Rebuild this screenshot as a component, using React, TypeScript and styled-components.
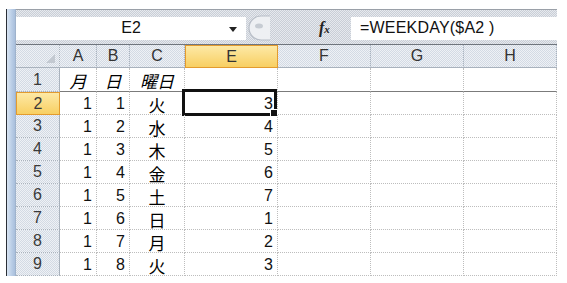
import { createGlobalStyle } from "styled-components";
import styled, { css } from "styled-components";

const GlobalStyle = createGlobalStyle`
  html, body {
    margin: 0;
    padding: 0;
    background: #fff;
  }
  body {
    font-family: "Liberation Sans", Arial, "Noto Sans CJK JP", sans-serif;
    color: #111;
  }
`;

const dither = (a: string, b: string) => css`
  background: repeating-conic-gradient(${a} 0 25%, ${b} 0 50%) 0 0 / 2px 2px;
`;

const Frame = styled.div`
  display: flex;
  padding: 9px 0 0 6px;
  width: 556px;
  height: 267px;
`;

const SideStrip = styled.div`
  width: 8px;
  border-left: 1px solid #2b2f36;
  border-right: 1px solid #9fb3cc;
  background: linear-gradient(90deg, #d9e5f3 0, #b9cde6 60%, #a9bfdc 100%);
`;

const Main = styled.div`
  width: 541px;
  display: flex;
  flex-direction: column;
`;

const FormulaBar = styled.div`
  height: 36px;
  box-sizing: border-box;
  border-top: 1px solid #9aa0a8;
  border-bottom: 1px solid #6f757d;
  ${dither("#c9ced6", "#e6e9ee")}
  display: flex;
  align-items: center;
  padding-top: 2px;
`;

const NameBox = styled.div`
  position: relative;
  width: 230px;
  height: 23px;
  background: #fff;
  display: flex;
  align-items: center;
  justify-content: center;
  font-size: 16px;
  color: #111;
`;

const DropArrow = styled.span`
  position: absolute;
  right: 9px;
  top: 10px;
  width: 0;
  height: 0;
  border-left: 4px solid transparent;
  border-right: 4px solid transparent;
  border-top: 5px solid #222;
`;

const Knob = styled.svg`
  margin-left: 2px;
  flex: none;
`;

const FxLabel = styled.span`
  margin-left: 49px;
  width: 32px;
  font-family: "Liberation Serif", "Times New Roman", serif;
  font-style: italic;
  font-weight: bold;
  font-size: 16px;
  color: #222;
  sub {
    font-size: 11px;
    vertical-align: baseline;
  }
`;

const FormulaInput = styled.div`
  flex: 1;
  height: 23px;
  background: #fff;
  display: flex;
  align-items: center;
  padding-left: 9px;
  font-size: 16px;
  color: #111;
  letter-spacing: 0.2px;
`;

const Grid = styled.div`
  display: grid;
  grid-template-columns: 44px 37px 33px 55px 93px 93px 93px 93px;
  grid-template-rows: 23px 24px repeat(8, 23px);
`;

const ColHead = styled.div<{ $active?: boolean; $corner?: boolean }>`
  box-sizing: border-box;
  display: flex;
  align-items: center;
  justify-content: center;
  font-size: 16px;
  color: #333;
  border-right: 1px dotted #a9b2bd;
  border-bottom: 1px solid #a9b2bd;
  ${dither("#d3dae4", "#eef1f5")}
  ${({ $active }) =>
    $active &&
    css`
      background: linear-gradient(#fde9a6, #f8cf62);
      border: 1px solid #e39b2e;
      color: #333;
    `}
  ${({ $corner }) =>
    $corner &&
    css`
      justify-content: flex-end;
      align-items: flex-end;
      padding: 0 4px 4px 0;
    `}
`;

const RowHead = styled.div<{ $active?: boolean }>`
  box-sizing: border-box;
  display: flex;
  align-items: center;
  justify-content: center;
  font-size: 16px;
  color: #3a3a3a;
  border-right: 1px solid #a9b2bd;
  border-bottom: 1px dotted #a9b2bd;
  ${dither("#d3dae4", "#eef1f5")}
  ${({ $active }) =>
    $active &&
    css`
      background: linear-gradient(#fde9a6, #f8cf62);
      border: 1px solid #e39b2e;
    `}
`;

const Cell = styled.div<{ $align?: "left" | "center" | "right"; $italic?: boolean; $frozen?: boolean }>`
  position: relative;
  box-sizing: border-box;
  display: flex;
  align-items: center;
  justify-content: ${({ $align }) =>
    $align === "center" ? "center" : $align === "left" ? "flex-start" : "flex-end"};
  padding: 2px 4px 0;
  font-size: 16px;
  font-style: ${({ $italic }) => ($italic ? "italic" : "normal")};
  color: #111;
  border-right: 1px dotted #bdbdbd;
  border-bottom: ${({ $frozen }) => ($frozen ? "1px solid #7b7b7b" : "1px dotted #bdbdbd")};
`;

const Kanji = styled.span`
  font-family: "Noto Sans CJK JP", "Noto Sans CJK SC", sans-serif;
  font-size: 17px;
  font-weight: 400;
  color: #000;
  line-height: 1;
`;

const Selection = styled.div`
  position: absolute;
  left: -3px;
  top: -3px;
  right: 0;
  bottom: -2px;
  border: 3px solid #111;
  pointer-events: none;
  &::after {
    content: "";
    position: absolute;
    right: -4px;
    bottom: -4px;
    width: 6px;
    height: 6px;
    background: #111;
    border: 1px solid #fff;
  }
`;

const columns = ["A", "B", "C", "E", "F", "G", "H"];

const rows = [
  { m: 1, d: 1, w: "火", v: 3 },
  { m: 1, d: 2, w: "水", v: 4 },
  { m: 1, d: 3, w: "木", v: 5 },
  { m: 1, d: 4, w: "金", v: 6 },
  { m: 1, d: 5, w: "土", v: 7 },
  { m: 1, d: 6, w: "日", v: 1 },
  { m: 1, d: 7, w: "月", v: 2 },
  { m: 1, d: 8, w: "火", v: 3 },
];

export default function App() {
  return (
    <>
      <GlobalStyle />
      <Frame>
        <SideStrip />
        <Main>
          <FormulaBar>
            <NameBox>
              E2
              <DropArrow />
            </NameBox>
            <Knob width="22" height="26" viewBox="0 0 22 26">
              <path
                d="M22 1 H13 A12 12 0 0 0 13 25 H22"
                fill="#eef0f3"
                stroke="#b8bec7"
                strokeWidth="1.2"
              />
              <ellipse cx="11" cy="11" rx="4" ry="2.5" fill="#c7ccd3" />
            </Knob>
            <FxLabel>
              f<sub>x</sub>
            </FxLabel>
            <FormulaInput>=WEEKDAY($A2 )</FormulaInput>
          </FormulaBar>
          <Grid>
            <ColHead $corner>
              <svg width="9" height="9" viewBox="0 0 9 9">
                <path d="M9 0 V9 H0 Z" fill="#c3c9d1" />
              </svg>
            </ColHead>
            {columns.map((c) => (
              <ColHead key={c} $active={c === "E"}>
                {c}
              </ColHead>
            ))}

            <RowHead>1</RowHead>
            <Cell $align="center" $italic $frozen>
              <Kanji>月</Kanji>
            </Cell>
            <Cell $align="center" $italic $frozen>
              <Kanji>日</Kanji>
            </Cell>
            <Cell $align="center" $italic $frozen>
              <Kanji>曜日</Kanji>
            </Cell>
            <Cell $frozen />
            <Cell $frozen />
            <Cell $frozen />
            <Cell $frozen />

            {rows.map((r, i) => (
              <Row key={i} n={i + 2} {...r} />
            ))}
          </Grid>
        </Main>
      </Frame>
    </>
  );
}

function Row({ n, m, d, w, v }: { n: number; m: number; d: number; w: string; v: number }) {
  const active = n === 2;
  return (
    <>
      <RowHead $active={active}>{n}</RowHead>
      <Cell>{m}</Cell>
      <Cell>{d}</Cell>
      <Cell $align="center">
        <Kanji>{w}</Kanji>
      </Cell>
      <Cell>
        {v}
        {active && <Selection />}
      </Cell>
      <Cell />
      <Cell />
      <Cell />
    </>
  );
}
